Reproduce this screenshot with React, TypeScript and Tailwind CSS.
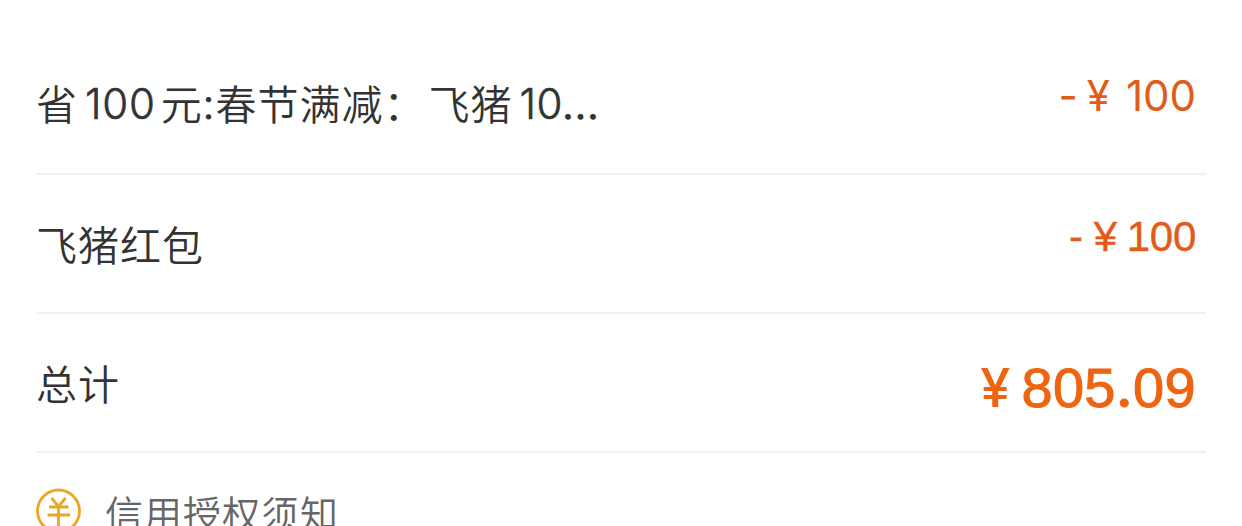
import type { ReactNode } from "react";

function Row({ label, children }: { label: ReactNode; children: ReactNode }) {
    return (
        <div className="flex h-[139px] justify-between border-b-2 border-[#f1f1f1] pr-[10px]">
            <div className="flex pt-[41px] whitespace-nowrap text-[#333]">
                {label}
            </div>
            {children}
        </div>
    );
}

function YuanIcon() {
    return (
        <svg
            width="46"
            height="46"
            viewBox="0 0 46 46"
            fill="none"
            stroke="#eaa722"
            strokeWidth="2.8"
            className="shrink-0"
        >
            <circle cx="22.5" cy="23" r="21" />
            <path d="M15.5 10l7 8.5 7-8.5M13 19h19.5M11.5 27h22.5M22.5 18V38" />
        </svg>
    );
}

export default function App() {
    return (
        <div className="h-[526px] overflow-hidden bg-white px-9 pt-9 font-['Inter','Noto_Sans_CJK_SC',sans-serif] text-[41px] leading-[60px] font-[350] tracking-[1px]">
            <Row
                label={
                    <div className="-mt-[2px] flex">
                        <span>省</span>
                        <span className="-mt-px ml-[7px] text-[42px] tracking-[0.8px] [-webkit-text-stroke:0.6px_#333]">
                            100
                        </span>
                        <span className="ml-[5px]">元</span>
                        <span className="-mt-px [-webkit-text-stroke:1px_#333]">
                            :
                        </span>
                        <span>春节满减：</span>
                        <span className="ml-[3px]">飞猪</span>
                        <span className="-mt-px ml-[7px] text-[42px] tracking-[0.6px] [-webkit-text-stroke:0.6px_#333]">
                            10
                            <span className="[-webkit-text-stroke:1.4px_#333]">
                                ...
                            </span>
                        </span>
                    </div>
                }
            >
                <div className="flex pt-[30px] text-[42px] font-normal tracking-[0px] text-[#e25b18]">
                    <span>-</span>
                    <span className="ml-[9px]">¥</span>
                    <span className="ml-[16px]">100</span>
                </div>
            </Row>
            <Row label="飞猪红包">
                <div className="flex pt-[32px] font-['Liberation_Sans',sans-serif] text-[42px] tracking-[-0.3px] text-[#e25b18] [-webkit-text-stroke:0.4px_#e25b18]">
                    <span>-</span>
                    <span className="ml-[11px]">¥</span>
                    <span className="ml-[10px]">100</span>
                </div>
            </Row>
            <Row label="总计">
                <div className="flex pt-[43px] font-['Liberation_Sans',sans-serif] text-[56px] tracking-[0.3px] text-[#ee6410] [-webkit-text-stroke:1px_#ee6410]">
                    <span className="mt-px font-['Inter'] text-[54px] font-medium [-webkit-text-stroke:0px]">
                        ¥
                    </span>
                    <span className="ml-[11px]">
                        805
                        <span className="font-['Inter'] font-medium">.</span>09
                    </span>
                </div>
            </Row>
            <div className="flex items-start pt-[35px]">
                <YuanIcon />
                <span className="-mt-[4px] ml-[23px] text-[38px] tracking-[1px] text-[#666]">
                    信用授权须知
                </span>
            </div>
        </div>
    );
}
